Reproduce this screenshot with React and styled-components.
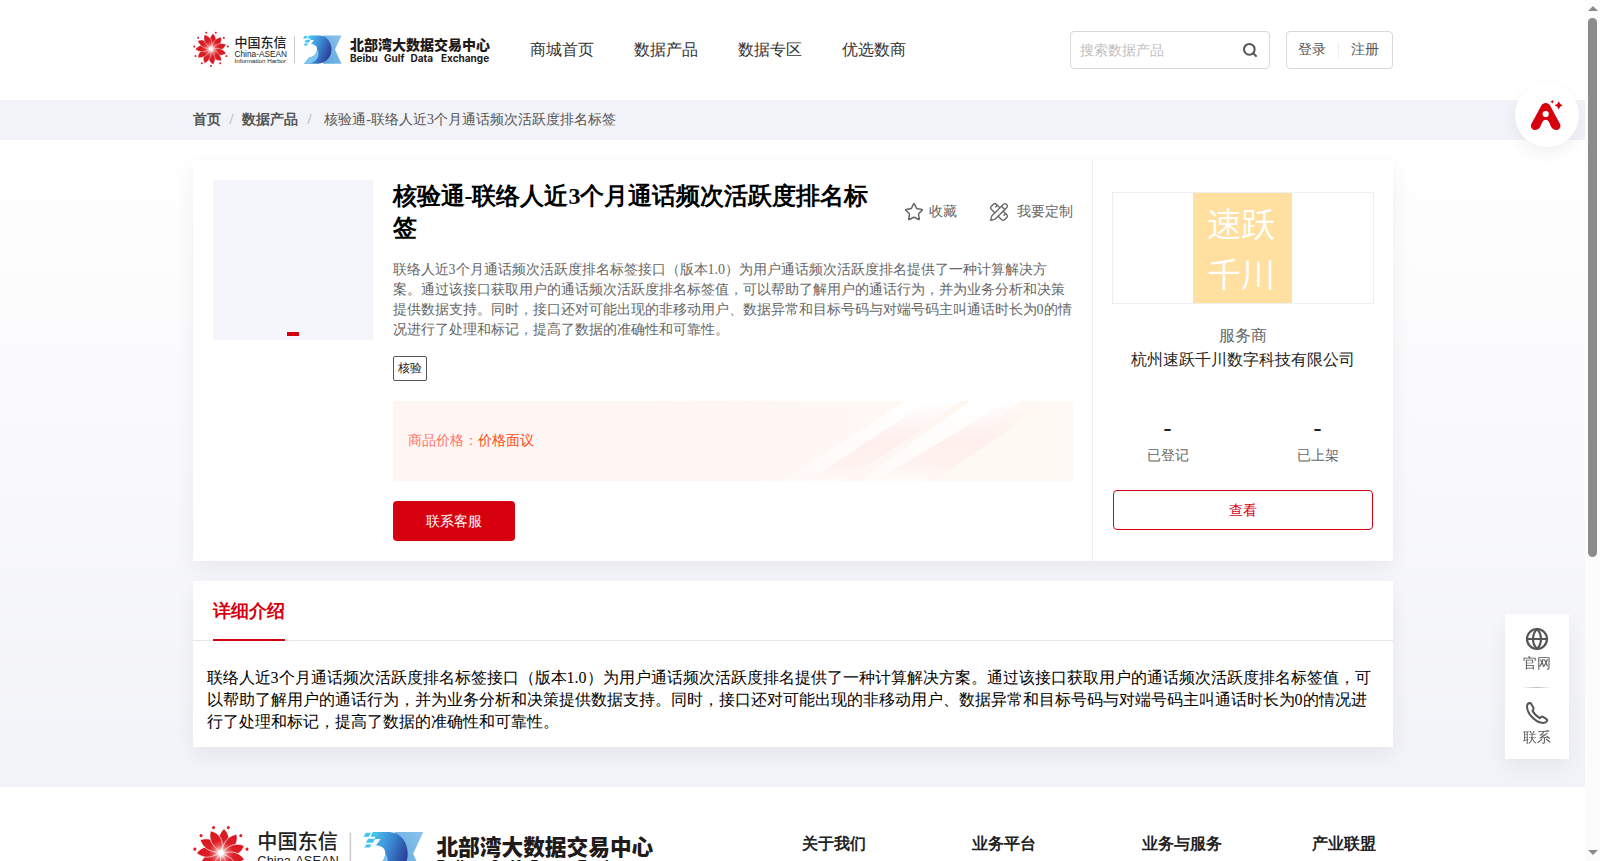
import styled, {createGlobalStyle} from "styled-components";
import {Globe, PencilRuler, Search, Star} from "lucide-react";

const GlobalStyle = createGlobalStyle`
    * {
        box-sizing: border-box;
    }
    body {
        margin: 0;
        padding-right: 15px;
        background-color: #ffffff;
        color: #222222;
        font-family: "Liberation Serif", serif;
        font-size: 14px;
    }
    a {
        color: inherit;
        text-decoration: none;
    }
    button, input {
        font-family: inherit;
    }
    h1, h2, h3, p, ol, ul, dl, dd {
        margin: 0;
        padding: 0;
    }
    svg {
        display: block;
    }
`

const Container = styled.div`
    max-width: 1200px;
    margin: 0 auto;
`

const HeaderRow = styled(Container)`
    height: 100px;
    display: flex;
    align-items: center;
`
const LogoSvg = styled.svg`
    width: ${({$width}) => $width}px;
    height: auto;
    flex: none;
`
const Nav = styled.nav`
    display: flex;
    gap: 40px;
    margin-left: 39px;
    font-size: 16px;
    color: #333333;
`
const SearchBox = styled.form`
    width: 200px;
    height: 38px;
    margin-left: auto;
    padding: 0 11px 0 9px;
    display: flex;
    align-items: center;
    border: 1px solid #d9d9d9;
    border-radius: 4px;
`
const SearchInput = styled.input`
    flex: 1;
    min-width: 0;
    padding: 2px 0 0;
    border: none;
    outline: none;
    background: none;
    font-size: 14px;

    &::placeholder {
        color: #c0c0c0;
    }
`
const IconButton = styled.button`
    padding: 0;
    border: none;
    background: none;
    color: #555555;
    cursor: pointer;
`
const Account = styled.div`
    height: 38px;
    margin-left: 16px;
    padding: 0 13px 0 11px;
    display: flex;
    align-items: center;
    gap: 12px;
    border: 1px solid #d9d9d9;
    border-radius: 4px;
    color: #555555;
`
const AccountLine = styled.span`
    width: 1px;
    height: 16px;
    background-color: #eeeeee;
`

const BreadcrumbBar = styled.nav`
    background-color: #f2f3f8;
`
const Crumbs = styled(Container).attrs({as: "ol"})`
    height: 40px;
    display: flex;
    align-items: center;
    list-style: none;
    color: #555555;
`
const Crumb = styled.li`
    font-weight: ${({$current}) => $current ? "normal" : "bold"};
    padding-left: ${({$current}) => $current ? "4px" : "0"};

    &:not(:last-child)::after {
        content: "/";
        margin: 0 9px;
        color: #b4b8c0;
        font-weight: bold;
    }
`

const Main = styled.main`
    padding: 20px 0 40px;
    background: linear-gradient(#ffffff, #f2f3f8);
`
const Card = styled(Container)`
    background-color: #ffffff;
    box-shadow: 0 8px 20px rgba(0, 0, 0, 0.06);
`
const ProductCard = styled(Card)`
    display: flex;
    margin-bottom: 20px;
`
const Product = styled.section`
    flex: 1;
    min-width: 0;
    padding: 20px 19px 20px 20px;
    display: flex;
    align-items: flex-start;
    gap: 20px;
`
const Cover = styled.div`
    flex: none;
    width: 160px;
    height: 160px;
    padding-bottom: 4px;
    display: flex;
    align-items: flex-end;
    justify-content: center;
    background-color: #f5f6fb;

    &::after {
        content: "";
        width: 12px;
        height: 4px;
        background-color: #d7000f;
    }
`
const Info = styled.div`
    flex: 1;
    min-width: 0;
`
const TitleRow = styled.div`
    display: flex;
    align-items: center;
    justify-content: space-between;
    gap: 30px;
`
const Title = styled.h1`
    flex: 1;
    font-size: 24px;
    line-height: 32px;
    color: #000000;
`
const Actions = styled.div`
    display: flex;
    gap: 32px;
`
const Action = styled.button`
    padding: 0;
    display: flex;
    align-items: center;
    gap: ${({$gap}) => $gap}px;
    border: none;
    background: none;
    color: #666666;
    font-size: 14px;
    cursor: pointer;
`
const Description = styled.p`
    margin: 16px 0;
    line-height: 20px;
    color: #666666;
`
const Tag = styled.span`
    display: inline-block;
    padding: 0 4px;
    border: 1px solid #555555;
    border-radius: 2px;
    font-size: 12px;
    line-height: 23px;
    vertical-align: top;
`
const PriceBanner = styled.div`
    position: relative;
    height: 80px;
    margin: 20px 0;
    padding: 0 15px;
    display: flex;
    align-items: center;
    overflow: hidden;
    background: linear-gradient(90deg, #fff5f3, #fff7f4 60%, #fff9f4 78%);
    color: #ff7467;
`
const Stripes = styled.svg`
    position: absolute;
    top: 0;
    right: 0;
    width: 680px;
    height: 80px;
`
const Price = styled.span`
    color: #ff4a10;
`
const ContactButton = styled.button`
    width: 122px;
    height: 40px;
    padding-top: 2px;
    border: none;
    border-radius: 4px;
    background-color: #d7000f;
    color: #ffffff;
    font-size: 14px;
    cursor: pointer;
`

const Supplier = styled.aside`
    flex: none;
    width: 301px;
    padding: 32px 19px 30px;
    border-left: 1px solid #eeeeee;
    text-align: center;
`
const SupplierLogo = styled.div`
    height: 112px;
    display: flex;
    justify-content: center;
    border: 1px solid #eeeeee;
`
const SupplierName = styled.div`
    width: 99px;
    padding: 5px 14px;
    background-color: #ffe0a0;
    color: #ffffff;
    font-family: "Noto Sans CJK SC", sans-serif;
    font-size: 34px;
    font-weight: 350;
    line-height: 50px;
    text-align: left;
`
const Company = styled.p`
    margin: 20px 0 42px;
    font-size: 16px;
    line-height: 24px;
    color: #222222;
`
const Muted = styled.span`
    display: block;
    color: #666666;
`
const Stats = styled.dl`
    display: flex;
    margin: 0 -19px 24px;
`
const Stat = styled.div`
    flex: 1;
    display: flex;
    flex-direction: column-reverse;
    gap: 4px;
`
const StatLabel = styled.dt`
    line-height: 20px;
    color: #666666;
`
const StatValue = styled.dd`
    font-size: 24px;
    font-weight: bold;
    line-height: 28px;
`
const ViewButton = styled.button`
    width: calc(100% - 2px);
    height: 40px;
    padding-top: 2px;
    border: 1px solid #d7000f;
    border-radius: 4px;
    background-color: #ffffff;
    color: #d7000f;
    font-size: 14px;
    cursor: pointer;
`

const TabBar = styled.div`
    height: 60px;
    padding: 0 20px;
    display: flex;
    border-bottom: 1px solid #e4e7ed;
`
const Tab = styled.button`
    height: 60px;
    padding: 2px 0 0;
    border: none;
    border-bottom: 2px solid #d7000f;
    background: none;
    color: #d7000f;
    font-size: 18px;
    font-weight: bold;
    cursor: pointer;
`
const DetailText = styled.p`
    padding: 26px 15px 14px 14px;
    font-size: 16px;
    line-height: 22px;
    color: #000000;
`

const FooterRow = styled(Container)`
    padding-top: 38px;
    display: flex;
    align-items: flex-start;
    justify-content: space-between;
`
const FooterLinks = styled.div`
    display: grid;
    grid-template-columns: repeat(3, 170px) 81px;
`
const FooterTitle = styled.h3`
    font-size: 16px;
    line-height: 38px;
`

const AiButton = styled.button`
    position: fixed;
    top: 83px;
    right: 21px;
    width: 64px;
    height: 64px;
    padding: 0 0 0 15px;
    border: none;
    border-radius: 50%;
    background-color: #ffffff;
    box-shadow: 0 6px 16px rgba(0, 0, 0, 0.06);
    cursor: pointer;
`
const SideTools = styled.aside`
    position: fixed;
    right: 31px;
    bottom: 102px;
    width: 64px;
    padding: 13px 0 9px;
    display: flex;
    flex-direction: column;
    align-items: center;
    background-color: #ffffff;
    box-shadow: 0 8px 20px rgba(0, 0, 0, 0.06);
    color: #555555;
`
const Tool = styled.a`
    display: flex;
    flex-direction: column;
    align-items: center;
    gap: 1px;
    line-height: 24px;
`
const ToolLine = styled.span`
    width: 30px;
    height: 1px;
    margin: 11px 0 13px;
    background: linear-gradient(90deg, #ffffff, #bbbbbb, #ffffff);
`

const ScrollTrack = styled.div`
    position: fixed;
    top: 0;
    right: 0;
    bottom: 0;
    width: 15px;
    padding: 6px 3px;
    display: flex;
    flex-direction: column;
    align-items: center;
    background-color: #fcfcfc;
`
const ScrollArrow = styled.span`
    width: 0;
    height: 0;
    border: 5px solid transparent;
    border-top: ${({$down}) => $down ? "5px solid #8b8b8b" : "none"};
    border-bottom: ${({$down}) => $down ? "none" : "5px solid #8b8b8b"};
`
const ScrollThumb = styled.span`
    width: 9px;
    height: calc(64% - 4px);
    margin: 7px 0 auto;
    border-radius: 5px;
    background-color: #8b8b8b;
`

const INTRO = "联络人近3个月通话频次活跃度排名标签接口（版本1.0）为用户通话频次活跃度排名提供了一种计算解决方案。通过该接口获取用户的通话频次活跃度排名标签值，可以帮助了解用户的通话行为，并为业务分析和决策提供数据支持。同时，接口还对可能出现的非移动用户、数据异常和目标号码与对端号码主叫通话时长为0的情况进行了处理和标记，提高了数据的准确性和可靠性。";
const NAME = "核验通-联络人近3个月通话频次活跃度排名标签";
const NAV = ["商城首页", "数据产品", "数据专区", "优选数商"];
const FOOTER = ["关于我们", "业务平台", "业务与服务", "产业联盟"];
const PETALS = Array.from({length: 11}, (_, i) => 16.4 + i * 360 / 11);

function Logo ({id, width}) {
    return (
        <LogoSvg $width={width} viewBox="0 0 298 38" role="img" aria-label="北部湾大数据交易中心">
            <defs>
                <radialGradient id={`${id}-red`} gradientUnits="userSpaceOnUse" cx="0" cy="0" r="16">
                    <stop offset="0.05" stopColor="#ffffff"/>
                    <stop offset="0.3" stopColor="#ea5a5c"/>
                    <stop offset="0.5" stopColor="#dc1f28"/>
                    <stop offset="1" stopColor="#d7141e"/>
                </radialGradient>
                <linearGradient id={`${id}-d`} x1="0" y1="0.2" x2="1" y2="0.6">
                    <stop offset="0" stopColor="#55cdf3"/>
                    <stop offset="0.5" stopColor="#3b8fd6"/>
                    <stop offset="1" stopColor="#2b3b98"/>
                </linearGradient>
                <linearGradient id={`${id}-x`} x1="0" y1="1" x2="1" y2="0">
                    <stop offset="0" stopColor="#5aa5dc"/>
                    <stop offset="1" stopColor="#8cc4ec"/>
                </linearGradient>
            </defs>
            <g transform="translate(18 18)">
                {PETALS.map(angle => (
                    <g key={angle} transform={`rotate(${angle})`}>
                        <circle cx="0" cy="-17" r="1" fill="#dc1f28"/>
                        <path d="M0 0C-2 -4 -6.500 -8 -2.500 -15.500C2.500 -13 5 -7 0 0Z" fill={`url(#${id}-red)`} stroke="#ffffff" strokeWidth="0.4"/>
                    </g>
                ))}
                <circle r="1.8" fill="#ffffff" opacity="0.8"/>
            </g>
            <g fill="#222222">
                <text x="41.5" y="15.8" fontSize="13" fontWeight="500" fontFamily="'Noto Sans CJK SC', sans-serif">中国东信</text>
                <g fontFamily="'Liberation Sans', Arial, sans-serif">
                    <text x="41.5" y="25.8" fontSize="8.3">China-ASEAN</text>
                    <text x="41.5" y="31.5" fontSize="6.2">Information Harbor</text>
                </g>
            </g>
            <path d="M101.5 5V32" stroke="#cccccc"/>
            <path d="M130 4.500H148.500L142 18.500L148.500 32.800H130L135 18.500Z" fill={`url(#${id}-x)`}/>
            <path d="M119 4.500H127C134 5 138.500 11 138.500 18.500C138.500 27 132 32.800 124 32.800H111L116 26.500C121 26 124 22.500 124 18C124 15.500 122.500 13.500 118 13L121 9H117Z" fill={`url(#${id}-d)`}/>
            <path d="M111 32.800L116 26.500C121 26 124 22.500 124 18C128 24 124 31 116 32.800Z" fill="#7dc4ee"/>
            <path d="M111.500 5H114.800L113.300 7.500H110ZM116 4.500H120L118.500 7.500H114.500ZM113 8.800H117.500L116 11.500H111.500ZM111.800 12.500H115.300L114 14.500H110.500Z" fill="#3fc4f0"/>
            <g fill="#221a18">
                <text x="157" y="19.300" fontSize="14" fontWeight="900" fontFamily="'Noto Sans CJK SC', sans-serif">北部湾大数据交易中心</text>
                <g fontSize="10" fontWeight="700" fontFamily="Inter, sans-serif">
                    <text x="157" y="30.500">Beibu</text>
                    <text x="191" y="30.500">Gulf</text>
                    <text x="217.500" y="30.500">Data</text>
                    <text x="248" y="30.500">Exchange</text>
                </g>
            </g>
        </LogoSvg>
    )
}

function BannerStripes () {
    return (
        <Stripes viewBox="0 0 680 80" aria-hidden="true">
            <defs>
                <linearGradient id="stripe-white" x1="0" y1="0" x2="0" y2="1">
                    <stop offset="0" stopColor="#ffffff"/>
                    <stop offset="0.7" stopColor="#ffffff" stopOpacity="0.5"/>
                    <stop offset="1" stopColor="#ffffff" stopOpacity="0.4"/>
                </linearGradient>
                <linearGradient id="stripe-pink" x1="0" y1="0" x2="0" y2="1">
                    <stop offset="0" stopColor="#fff0ee" stopOpacity="0"/>
                    <stop offset="0.5" stopColor="#ffefed"/>
                    <stop offset="0.8" stopColor="#fff1ee" stopOpacity="0.9"/>
                    <stop offset="1" stopColor="#fff2ef" stopOpacity="0"/>
                </linearGradient>
            </defs>
            <path d="M513 0H568L451 80H390Z" fill="url(#stripe-white)"/>
            <path d="M537 0H571L452 80H414Z" fill="url(#stripe-pink)"/>
            <path d="M568 0H577L469 80H460Z" fill="#fff5f1"/>
            <path d="M577 0H627L533 80H464Z" fill="url(#stripe-white)"/>
            <path d="M615 0H656L542 80H483Z" fill="url(#stripe-pink)"/>
        </Stripes>
    )
}

function AiIcon () {
    return (
        <svg width="34" height="32" viewBox="0 0 34 32" aria-hidden="true">
            <path d="M15.700 4C17.700 4 19.200 5 20.200 6.800L29.800 24.500C31.700 28 29.500 31 26.500 31C24 31 22.200 29.800 21 27.500C20 25.500 19 20.700 15.700 20.700C12.400 20.700 11.400 25.500 10.400 27.500C9.200 29.800 7.400 31 4.900 31C1.900 31 -0.300 28 1.600 24.500L11.200 6.800C12.200 5 13.700 4 15.700 4Z" fill="#d7000f"/>
            <circle cx="15.700" cy="15" r="3.100" fill="#ffffff"/>
            <path d="M28.700 2.300Q29.600 5.500 32.700 6.300Q29.600 7.200 28.700 10.400Q27.800 7.200 24.700 6.300Q27.800 5.500 28.700 2.300ZM22.300 1Q22.700 2.400 24 2.700Q22.700 3.100 22.300 4.500Q21.900 3.100 20.600 2.700Q21.900 2.400 22.300 1Z" fill="#d7000f"/>
        </svg>
    )
}

function PhoneIcon () {
    return (
        <svg width="24" height="24" viewBox="0 0 24 24" fill="none" stroke="currentColor" strokeWidth="2" strokeLinejoin="round" aria-hidden="true">
            <path d="M4.800 2Q2.200 2.200 2 5.200Q2 11 7 16Q12.500 21.800 18.500 22Q21.300 21.800 22.200 19.700Q22.400 18.800 21.600 18.200L18 15.800Q17 15.300 16.200 16L14.800 17.200Q9.500 14 7.500 9.800L8.400 8.300Q8.900 7.400 8.300 6.400L6.300 2.900Q5.700 2 4.800 2Z"/>
        </svg>
    )
}

export default function App () {
    return (
        <>
            <GlobalStyle/>
            <header>
                <HeaderRow>
                    <Logo id="header" width={298}/>
                    <Nav>
                        {NAV.map(item => <a key={item} href="#">{item}</a>)}
                    </Nav>
                    <SearchBox role="search">
                        <SearchInput type="text" placeholder="搜索数据产品" aria-label="搜索数据产品"/>
                        <IconButton type="button" aria-label="搜索"><Search size={16} strokeWidth={3}/></IconButton>
                    </SearchBox>
                    <Account>
                        <a href="#">登录</a>
                        <AccountLine/>
                        <a href="#">注册</a>
                    </Account>
                </HeaderRow>
            </header>
            <BreadcrumbBar>
                <Crumbs>
                    <Crumb><a href="#">首页</a></Crumb>
                    <Crumb><a href="#">数据产品</a></Crumb>
                    <Crumb $current>{NAME}</Crumb>
                </Crumbs>
            </BreadcrumbBar>
            <Main>
                <ProductCard>
                    <Product>
                        <Cover/>
                        <Info>
                            <TitleRow>
                                <Title>{NAME}</Title>
                                <Actions>
                                    <Action $gap={5}><Star size={20} strokeWidth={1.8}/>收藏</Action>
                                    <Action $gap={8}><PencilRuler size={20} strokeWidth={1.6}/>我要定制</Action>
                                </Actions>
                            </TitleRow>
                            <Description>{INTRO}</Description>
                            <Tag>核验</Tag>
                            <PriceBanner>
                                <BannerStripes/>
                                商品价格：<Price>价格面议</Price>
                            </PriceBanner>
                            <ContactButton>联系客服</ContactButton>
                        </Info>
                    </Product>
                    <Supplier>
                        <SupplierLogo>
                            <SupplierName>速跃千川</SupplierName>
                        </SupplierLogo>
                        <Company>
                            <Muted>服务商</Muted>
                            杭州速跃千川数字科技有限公司
                        </Company>
                        <Stats>
                            <Stat>
                                <StatLabel>已登记</StatLabel>
                                <StatValue>-</StatValue>
                            </Stat>
                            <Stat>
                                <StatLabel>已上架</StatLabel>
                                <StatValue>-</StatValue>
                            </Stat>
                        </Stats>
                        <ViewButton>查看</ViewButton>
                    </Supplier>
                </ProductCard>
                <Card as="section">
                    <TabBar role="tablist">
                        <Tab role="tab" aria-selected="true">详细介绍</Tab>
                    </TabBar>
                    <DetailText>{INTRO}</DetailText>
                </Card>
            </Main>
            <footer>
                <FooterRow>
                    <Logo id="footer" width={462}/>
                    <FooterLinks>
                        {FOOTER.map(title => <FooterTitle key={title}>{title}</FooterTitle>)}
                    </FooterLinks>
                </FooterRow>
            </footer>
            <AiButton aria-label="AI"><AiIcon/></AiButton>
            <SideTools>
                <Tool href="#"><Globe size={24} strokeWidth={2.2}/>官网</Tool>
                <ToolLine/>
                <Tool href="#"><PhoneIcon/>联系</Tool>
            </SideTools>
            <ScrollTrack aria-hidden="true">
                <ScrollArrow/>
                <ScrollThumb/>
                <ScrollArrow $down/>
            </ScrollTrack>
        </>
    )
}
